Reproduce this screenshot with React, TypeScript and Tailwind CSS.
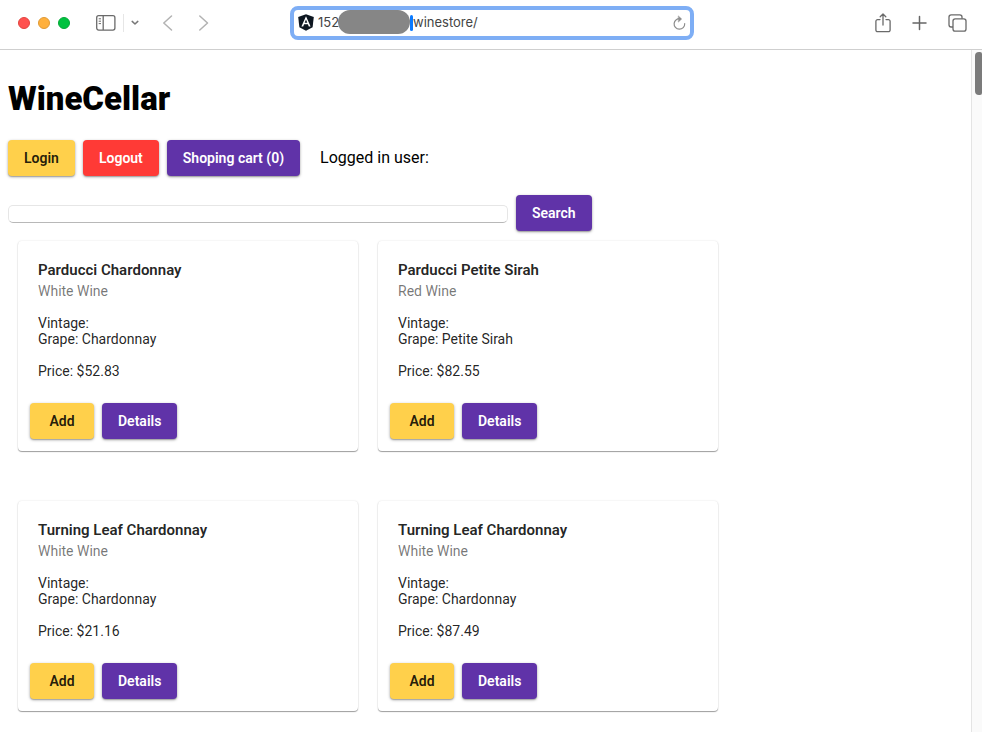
import React from "react";

type Wine = { name: string; kind: string; grape: string; price: string };

const wines: Wine[] = [
  { name: "Parducci Chardonnay", kind: "White Wine", grape: "Chardonnay", price: "$52.83" },
  { name: "Parducci Petite Sirah", kind: "Red Wine", grape: "Petite Sirah", price: "$82.55" },
  { name: "Turning Leaf Chardonnay", kind: "White Wine", grape: "Chardonnay", price: "$21.16" },
  { name: "Turning Leaf Chardonnay", kind: "White Wine", grape: "Chardonnay", price: "$87.49" },
];

const tones = {
  accent: "bg-[#ffd04b] text-black/87",
  warn: "bg-[#ff3a36] text-white",
  primary: "bg-[#6033a8] text-white",
};

function Button({
  tone,
  type = "button",
  children,
}: {
  tone: keyof typeof tones;
  type?: "button" | "submit";
  children: React.ReactNode;
}) {
  return (
    <button
      type={type}
      className={`h-9 min-w-16 rounded-sm px-4 text-sm font-semibold whitespace-nowrap shadow-[0_1px_3px_rgba(0,0,0,0.35),0_1px_1px_rgba(0,0,0,0.15)] ${tones[tone]}`}
    >
      {children}
    </button>
  );
}

function WineCard({ wine }: { wine: Wine }) {
  return (
    <article className="flex h-[210px] flex-col rounded-sm bg-white shadow-[0_1px_1px_rgba(0,0,0,0.36),0_0_2px_rgba(0,0,0,0.12)]">
      <div className="px-5 pt-[18px]">
        <h2 className="text-[15px] leading-[22px] font-semibold text-black/87">{wine.name}</h2>
        <p className="text-sm leading-5 text-black/54">{wine.kind}</p>
      </div>
      <div className="px-5 pt-[14px] text-sm leading-4 text-black/87">
        <p>Vintage:</p>
        <p>Grape: {wine.grape}</p>
        <p className="mt-4">Price: {wine.price}</p>
      </div>
      <div className="mt-auto flex gap-2 px-3 pb-3">
        <Button tone="accent">Add</Button>
        <Button tone="primary">Details</Button>
      </div>
    </article>
  );
}

function Toolbar() {
  return (
    <header className="grid h-[50px] shrink-0 grid-cols-[1fr_minmax(0,404px)_1fr] items-center border-b border-[#cfcfcf] bg-white pb-1 pl-0.5">
      <div className="flex items-center pl-4">
        <div className="flex gap-2">
          <span className="size-3 rounded-full border border-[#e2443f] bg-[#ff514e]" />
          <span className="size-3 rounded-full border border-[#e09a35] bg-[#ffb03c]" />
          <span className="size-3 rounded-full border border-[#05a838] bg-[#00c23f]" />
        </div>
        <button type="button" aria-label="Sidebar" className="ml-[26px]">
          <svg width="20" height="18" viewBox="0 0 20 18" fill="none" stroke="#6a6a6a" strokeWidth="1.3">
            <rect x="0.7" y="1.7" width="18.2" height="14.4" rx="2" />
            <path d="M7.2 1.7v14.4" />
            <path d="M2.7 4.8h2.3M2.7 7.2h2.3M2.7 9.6h2.3" strokeWidth="1" />
          </svg>
        </button>
        <span className="ml-[7px] h-[18px] w-px bg-[#e6e6e6]" />
        <button type="button" aria-label="Tab groups" className="ml-[7px]">
          <svg width="8" height="6" viewBox="0 0 8 6" fill="none" stroke="#777" strokeWidth="1.5" strokeLinecap="round" strokeLinejoin="round">
            <path d="M1.200 1.400L4 4l2.800-2.600" />
          </svg>
        </button>
        <button type="button" aria-label="Back" className="ml-6">
          <svg width="10" height="16" viewBox="0 0 10 16" fill="none" stroke="#b2b2b2" strokeWidth="1.5" strokeLinecap="round" strokeLinejoin="round">
            <path d="M8.500 1L.8 8l7.700 7" />
          </svg>
        </button>
        <button type="button" aria-label="Forward" className="ml-[26px]">
          <svg width="10" height="16" viewBox="0 0 10 16" fill="none" stroke="#b2b2b2" strokeWidth="1.5" strokeLinecap="round" strokeLinejoin="round">
            <path d="M.8 1l7.700 7-7.700 7" />
          </svg>
        </button>
      </div>

      <div className="flex h-[34px] items-center rounded-lg border-4 border-[#7eaef5] bg-white pr-1 pl-1 font-[Inter,sans-serif] text-[13px] text-[#444]">
        <svg width="16" height="17" viewBox="0 0 16 17" className="shrink-0">
          <path d="M8 .3l7.8 2.8-1.2 10.1L8 16.8 1.4 13.2.2 3.1z" fill="#0d1620" />
          <path d="M8 2.2L3.4 12.6h1.8l.9-2.3h3.8l.9 2.3h1.8zM8 5.5l1.3 3.3H6.7z" fill="#fff" fillRule="evenodd" />
        </svg>
        <span className="w-6 shrink-0 pl-1">152</span>
        <span className="h-6 w-[72px] shrink-0 -translate-y-px rounded-full bg-[#868686]" />
        <span className="h-4 w-[3px] shrink-0 rounded-sm bg-[#0a7aff]" />
        <input
          type="text"
          aria-label="Address"
          defaultValue="winestore/"
          className="min-w-0 flex-1 bg-transparent outline-none"
        />
        <button type="button" aria-label="Reload">
          <svg width="13" height="16" viewBox="0 0 13 16" fill="none" stroke="#8c8c8c" strokeWidth="1.2" strokeLinecap="round">
            <path d="M7.4 3.7A5.3 5.3 0 1 0 11.7 8.6" />
            <path d="M5.6 1.2l3 2.8-3 2.8z" fill="#8c8c8c" strokeWidth="0.6" />
          </svg>
        </button>
      </div>

      <div className="flex items-center justify-end pr-[15px]">
        <button type="button" aria-label="Share">
          <svg width="16" height="20" viewBox="0 0 16 20" fill="none" stroke="#6a6a6a" strokeWidth="1.3" strokeLinecap="round" strokeLinejoin="round">
            <path d="M5 6.6H2.6A1.7 1.7 0 0 0 .9 8.300v8.700a1.700 1.700 0 0 0 1.700 1.700h10.800a1.700 1.700 0 0 0 1.700-1.700V8.300a1.700 1.700 0 0 0-1.700-1.700H11" />
            <path d="M8 12V1.200M5.200 3.800L8 1l2.800 2.800" />
          </svg>
        </button>
        <button type="button" aria-label="New tab" className="ml-[21px]">
          <svg width="15" height="16" viewBox="0 0 15 16" fill="none" stroke="#666" strokeWidth="1.500" strokeLinecap="round">
            <path d="M7.500 1.500v13M1 8h13" />
          </svg>
        </button>
        <button type="button" aria-label="Show tabs" className="ml-[21px]">
          <svg width="19" height="18" viewBox="0 0 19 18" fill="none" stroke="#6a6a6a" strokeWidth="1.300">
            <rect x="5" y="4.800" width="13" height="12.400" rx="2.200" />
            <path d="M5 13H3.200A2.200 2.200 0 0 1 1 10.800V3A2.200 2.200 0 0 1 3.200.8h8.600A2.200 2.200 0 0 1 14 3v1.800" />
          </svg>
        </button>
      </div>
    </header>
  );
}

export default function App() {
  return (
    <div className="flex h-screen flex-col overflow-hidden bg-white font-[Roboto,sans-serif] text-black">
      <Toolbar />
      <div className="flex min-h-0 flex-1">
        <main className="min-w-0 flex-1 overflow-hidden px-2 pt-[30px]">
          <h1 className="text-[33px] leading-[38px] font-black">WineCellar</h1>
          <div className="mt-[22px] flex items-center gap-2">
            <Button tone="accent">Login</Button>
            <Button tone="warn">Logout</Button>
            <Button tone="primary">Shoping cart (0)</Button>
            <p className="ml-3 text-base">Logged in user:</p>
          </div>
          <form className="mt-[19px] flex items-center gap-2" onSubmit={(e) => e.preventDefault()}>
            <input
              type="text"
              aria-label="Search wines"
              className="mt-px h-[18px] w-[500px] rounded-[5px] border border-[#e6e6e6] border-b-[#b8b8b8] bg-white px-1 text-xs outline-none"
            />
            <Button tone="primary" type="submit">
              Search
            </Button>
          </form>
          <section className="mt-[10px] grid grid-cols-[340px_340px] gap-x-5 gap-y-[50px] px-[10px]">
            {wines.map((wine, i) => (
              <WineCard key={i} wine={wine} />
            ))}
          </section>
        </main>
        <div className="w-[11px] shrink-0 border-l border-[#e4e4e4] bg-[#fafafa] pt-[2px] pl-[3px]">
          <div className="h-[43px] rounded-l-sm rounded-r-xs bg-[#7b7b7b]" />
        </div>
      </div>
    </div>
  );
}
